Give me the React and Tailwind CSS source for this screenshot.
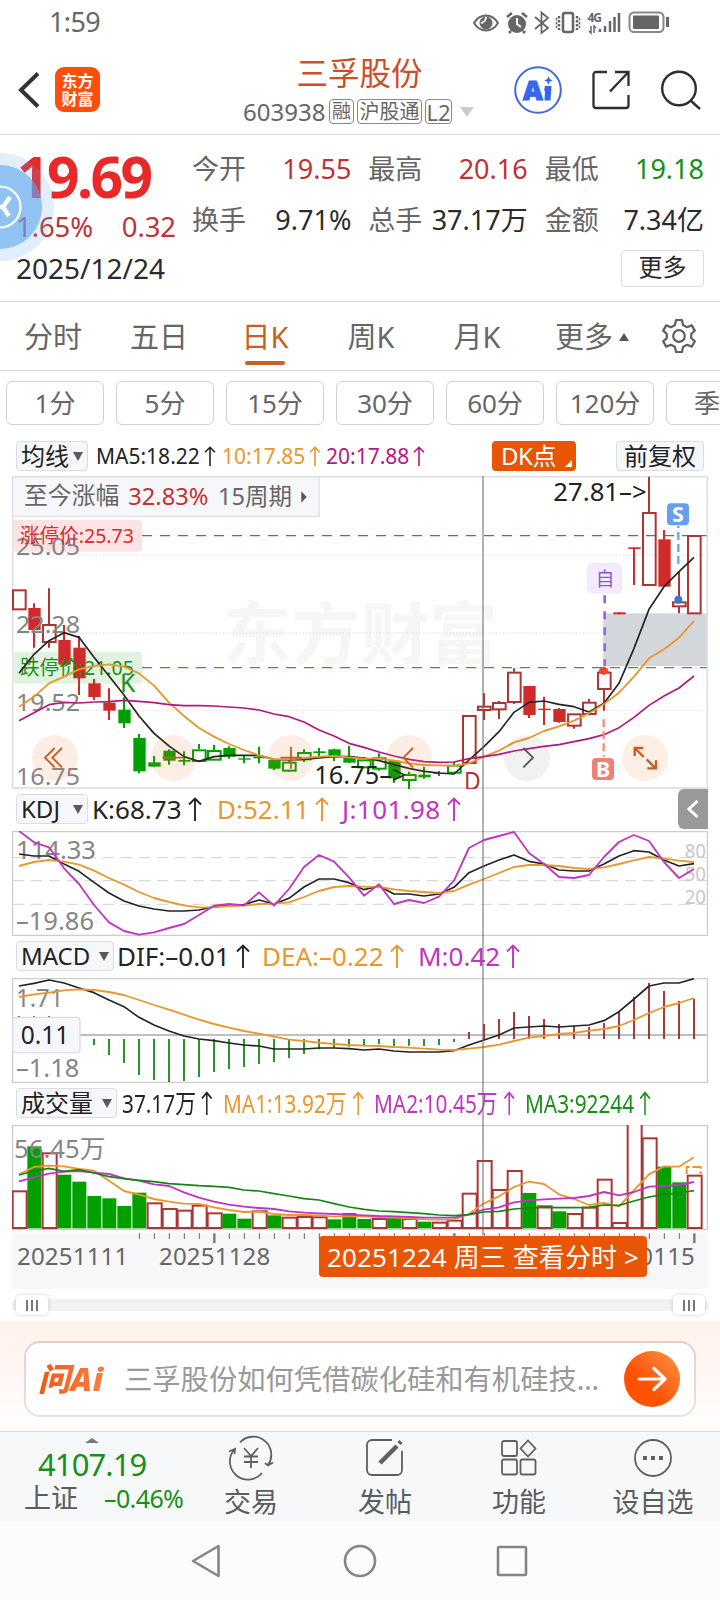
import React from "react";

// Every chart panel uses three drawing units per pixel; candle i sits at STEP * i + START.
const START = 57;
const STEP = 45;
const xAt = (i) => START + STEP * i;

const RED = "#ad3534";
const RED_FILL = "#cf2b2b";
const GREEN = "#00a000";
const ORANGE = "#e8982c";
const PURPLE = "#bf35c4";
const MAGENTA = "#b2187f";
const BLACK = "#242424";

// [kind, high, top, bottom, low] — R/G hollow bodies, r/g solid ones
const CANDLES = [
  ["R", 358, 358, 418, 418], ["r", 400, 414, 480, 533], ["R", 355, 462, 516, 533], ["r", 465, 510, 584, 584],
  ["r", 498, 533, 625, 675], ["r", 627, 640, 681, 690], ["r", 655, 698, 722, 750], ["g", 682, 719, 760, 774],
  ["g", 792, 804, 904, 910], ["g", 858, 877, 890, 890], ["g", 838, 842, 872, 884], ["g", 844, 870, 875, 886],
  ["G", 822, 838, 873, 873], ["G", 825, 840, 869, 869], ["g", 829, 834, 860, 866], ["g", 855, 865, 869, 880],
  ["g", 830, 860, 865, 880], ["g", 868, 870, 896, 900], ["G", 870, 875, 902, 905], ["G", 838, 846, 868, 876],
  ["g", 834, 844, 849, 858], ["g", 836, 838, 862, 873], ["g", 828, 864, 878, 878], ["G", 862, 868, 892, 892],
  ["G", 850, 862, 896, 902], ["g", 870, 872, 925, 938], ["G", 905, 912, 930, 958], ["g", 890, 914, 922, 926],
  ["g", 903, 909, 912, 918], ["G", 875, 884, 908, 912], ["R", 735, 735, 879, 880], ["R", 670, 707, 720, 750],
  ["R", 693, 696, 718, 747], ["R", 595, 605, 696, 702], ["r", 648, 648, 735, 744], ["r", 680, 716, 720, 765],
  ["r", 714, 717, 756, 758], ["R", 730, 730, 767, 776], ["R", 687, 695, 732, 736], ["R", 590, 605, 657, 722],
  ["r", 427, 427, 433, 433], ["r", 232, 232, 237, 345], ["R", 20, 126, 345, 348], ["r", 180, 208, 350, 350],
  ["R", 305, 394, 409, 430], ["R", 195, 195, 430, 430],
];

const MA5 = [610, 553, 512, 488, 502, 562, 618, 675, 738, 790, 828, 860, 874, 860, 856, 856, 856, 868, 870, 868, 864, 860, 860, 864, 872, 884, 895, 904, 909, 912, 870, 830, 785, 727, 697, 693, 703, 710, 726, 700, 640, 535, 418, 350, 305, 262];
const MA10 = [710, 680, 640, 620, 598, 588, 583, 590, 610, 647, 698, 738, 774, 800, 822, 840, 856, 868, 868, 864, 860, 858, 862, 866, 866, 872, 880, 885, 886, 888, 880, 860, 842, 817, 804, 783, 769, 752, 730, 702, 668, 620, 565, 538, 503, 453];
const MA20 = [752, 728, 704, 697, 699, 696, 695, 691, 694, 698, 704, 707, 707, 708, 711, 714, 720, 732, 740, 756, 780, 798, 820, 832, 846, 858, 868, 875, 877, 876, 866, 860, 853, 843, 836, 829, 824, 815, 806, 794, 773, 742, 706, 678, 654, 618];

const K_LINE = [192, 198, 198, 222, 244, 277, 309, 333, 348, 357, 363, 363, 360, 350, 346, 344, 330, 342, 325, 291, 267, 267, 278, 299, 288, 312, 312, 318, 312, 292, 248, 228, 210, 195, 214, 222, 240, 243, 243, 222, 198, 182, 186, 210, 228, 221];
const D_LINE = [228, 216, 210, 215, 224, 242, 264, 284, 306, 324, 336, 346, 352, 352, 348, 347, 342, 341, 337, 321, 303, 291, 288, 290, 291, 298, 303, 306, 309, 303, 284, 267, 249, 231, 225, 225, 228, 234, 237, 232, 222, 211, 201, 206, 212, 216];
const J_LINE = [123, 157, 172, 235, 282, 345, 397, 423, 434, 427, 414, 402, 375, 347, 342, 346, 307, 347, 297, 231, 195, 215, 262, 317, 283, 342, 330, 339, 320, 272, 174, 150, 138, 126, 189, 222, 261, 264, 255, 201, 156, 135, 153, 216, 264, 237];

const DIF = [588, 580, 570, 579, 594, 608, 630, 650, 682, 705, 723, 738, 747, 752, 759, 765, 768, 777, 777, 777, 774, 774, 776, 780, 777, 783, 786, 786, 786, 782, 765, 750, 735, 714, 711, 708, 711, 708, 705, 692, 665, 627, 588, 579, 579, 566];
const DEA = [621, 613, 608, 601, 598, 600, 606, 615, 630, 645, 659, 674, 689, 702, 713, 723, 731, 740, 749, 753, 758, 762, 765, 767, 768, 771, 773, 776, 779, 780, 776, 771, 764, 753, 743, 738, 732, 729, 722, 717, 708, 690, 669, 651, 639, 624];
const MACD_ENDS = [678, 678, 678, 700, 730, 765, 795, 819, 855, 870, 876, 873, 861, 846, 837, 831, 822, 816, 804, 792, 778, 773, 770, 769, 762, 769, 767, 768, 765, 756, 726, 702, 687, 666, 678, 687, 702, 708, 711, 699, 663, 621, 579, 603, 633, 627];

const VOLUMES = [
  ["R", 317], ["g", 184], ["R", 203], ["g", 269], ["g", 290], ["g", 333], ["g", 340], ["g", 363], ["g", 323], ["R", 353],
  ["R", 370], ["R", 375], ["R", 360], ["R", 383], ["g", 386], ["g", 401], ["R", 377], ["g", 391], ["R", 396], ["R", 394],
  ["R", 395], ["g", 403], ["g", 384], ["g", 402], ["R", 400], ["g", 398], ["R", 400], ["g", 410], ["R", 411], ["R", 405],
  ["R", 324], ["R", 226], ["R", 313], ["R", 256], ["g", 324], ["R", 362], ["g", 379], ["R", 385], ["R", 366], ["R", 282],
  ["R", 412], ["R", 90], ["R", 158], ["g", 245], ["g", 292], ["R", 270],
];
const VOL_MA1 = [268, 246, 242, 244, 252, 257, 287, 318, 329, 342, 350, 356, 357, 367, 375, 381, 380, 387, 390, 390, 391, 395, 393, 395, 396, 398, 400, 403, 404, 403, 387, 355, 334, 306, 290, 297, 328, 342, 360, 354, 364, 316, 268, 244, 245, 217];
const VOL_MA2 = [289, 277, 266, 260, 258, 263, 267, 280, 287, 298, 303, 322, 338, 350, 359, 365, 369, 372, 379, 383, 385, 387, 389, 391, 393, 394, 396, 398, 398, 398, 388, 374, 367, 352, 346, 343, 341, 339, 333, 321, 331, 321, 305, 303, 300, 291];
const VOL_MA3 = [270, 258, 250, 259, 254, 264, 275, 281, 286, 290, 296, 299, 302, 304, 307, 315, 318, 326, 333, 341, 345, 356, 366, 373, 378, 380, 383, 386, 390, 392, 389, 381, 379, 372, 369, 367, 368, 368, 367, 360, 361, 348, 336, 328, 324, 317];

const QUOTES = [
  ["今开", "19.55", "text-[#c03334]"],
  ["最高", "20.16", "text-[#c03334]"],
  ["最低", "19.18", "text-[#179017]"],
  ["换手", "9.71%", "text-[#2b2b2b]"],
  ["总手", "37.17万", "text-[#2b2b2b]"],
  ["金额", "7.34亿", "text-[#2b2b2b]"],
];

const TABS = ["分时", "五日", "日K", "周K", "月K"];
const INTERVALS = ["1分", "5分", "15分", "30分", "60分", "120分", "季K"];

function Line({ data, color, width = 5 }) {
  return (
    <polyline
      points={data.map((y, i) => `${xAt(i)},${y}`).join(" ")}
      fill="none"
      stroke={color}
      strokeWidth={width}
      strokeLinejoin="round"
    />
  );
}

function Label({ x, y, w, size = 72, color = "#858585", children }) {
  return (
    <text x={x} y={y} textLength={w} lengthAdjust="spacingAndGlyphs" fontSize={size} fill={color}>
      {children}
    </text>
  );
}

function Up({ className = "" }) {
  return (
    <svg className={`inline-block shrink-0 ${className}`} viewBox="0 0 14 24" fill="none" stroke="currentColor" strokeWidth="1.900">
      <path d="M7 24V1M1 7.500l6-6 6 6" />
    </svg>
  );
}

function Caret() {
  return (
    <svg className="w-[10px] h-[9px] shrink-0" viewBox="0 0 10 9">
      <path d="M0 0h10L5 9z" fill="#5a5a5a" />
    </svg>
  );
}

function Picker({ className, children }) {
  return (
    <div className={`flex h-[30px] shrink-0 items-center justify-between rounded-[4px] border border-[#d9dce2] bg-[#f6f7fb] px-[4px] text-[24px] leading-none whitespace-nowrap text-[#222] ${className}`}>
      {children}
      <Caret />
    </div>
  );
}

// Indicator read-out: value text followed by its trend arrow
function Reading({ className, children }) {
  return (
    <div className={`flex shrink-0 items-center gap-[6px] text-[26px] leading-none whitespace-nowrap ${className}`}>
      <span>{children}</span>
      <Up className="w-[14px] h-[24px]" />
    </div>
  );
}

function NarrowReading({ className, children }) {
  return (
    <div className={`flex shrink-0 items-center whitespace-nowrap ${className}`}>
      <div className="flex origin-left scale-x-[0.8] items-center gap-[7px] text-[26px] leading-none">
        <span>{children}</span>
        <Up className="w-[14px] h-[24px]" />
      </div>
    </div>
  );
}

function StatusBar() {
  return (
    <div className="flex h-[45px] items-center justify-between pl-[49px] pr-[49px] text-[27px] tracking-[-0.6px] text-[#666]">
      <span>1:59</span>
      <svg className="h-[24px] w-[198px]" viewBox="0 0 198 24" fill="none" stroke="#666" strokeWidth="2">
        <path d="M1 12c6-10 18-10 24 0-6 10-18 10-24 0z" />
        <circle cx="13" cy="12" r="6.500" fill="#666" stroke="none" />
        <path d="M13 6a6 6 0 0 1-5 6" stroke="#fff" />
        <circle cx="44" cy="13" r="9" fill="#666" stroke="none" />
        <path d="M44 7v6l4 3" stroke="#fff" />
        <path d="M34 6l5-4M54 6l-5-4M38 20l-2 2M50 20l2 2" strokeWidth="2.500" />
        <path d="M62 6l13 11-6.500 5V1.500L75 7 62 18" strokeWidth="1.800" />
        <rect x="90" y="2" width="10" height="19" rx="2" strokeWidth="2.500" />
        <path d="M86 5v14M104 5v14" strokeDasharray="2.500 1.500" strokeWidth="2.500" />
        <path d="M83.500 7v10M106.500 7v10" strokeDasharray="2.500 1.500" strokeWidth="1.500" />
        <text x="114.500" y="10.500" fontSize="12" fontWeight="700" fill="#666" stroke="none" letterSpacing="-1">4G</text>
        <path d="M118 15v7l-2-2M121 22v-7l2 2" strokeWidth="1.500" />
        <path d="M127 18v3M132 15v6M137 10v11M141.500 6v15M146 2v19" strokeWidth="2.500" />
        <rect x="156.500" y="1.500" width="34" height="19.500" rx="4.500" stroke="#888" strokeWidth="2" />
        <rect x="160" y="4.500" width="26" height="13.500" rx="1" fill="#666" stroke="none" />
        <path d="M194.500 6v10" strokeWidth="3" />
      </svg>
    </div>
  );
}

function Header() {
  return (
    <header className="flex h-[90px] items-center border-b-[1.5px] border-[#d6d6d6] pl-[18px]">
      <svg className="h-[36px] w-[22px]" viewBox="0 0 22 36" fill="none" stroke="#333" strokeWidth="4">
        <path d="M20 1.500L3 18 20 34.500" />
      </svg>
      <div className="ml-[15px] flex h-[45px] w-[45px] flex-col items-center justify-center rounded-[9px] bg-[#ff4d0a] text-[16px] font-bold leading-[18px] text-white">
        <span>东方</span>
        <span>财富</span>
      </div>
      <div className="ml-[142px] flex w-[233px] flex-col items-center">
        <h1 className="pl-[2px] text-[31.500px] leading-[36px] text-[#cb4f2b]">三孚股份</h1>
        <div className="mt-[8px] flex items-center text-[20px] leading-none whitespace-nowrap text-[#666]">
          <span className="w-[86px] text-[24px] leading-[24px]">603938</span>
          <span className="flex h-[25px] w-[25px] items-center justify-center rounded-[4px] border border-[#888] text-[19px]">融</span>
          <span className="ml-[3px] flex h-[25px] w-[65px] items-center justify-center rounded-[4px] border border-[#888]">沪股通</span>
          <span className="ml-[3px] flex h-[25px] w-[27px] items-center justify-center rounded-[4px] border border-[#888] text-[22px]">L2</span>
          <svg className="ml-[8px] h-[10px] w-[14px]" viewBox="0 0 14 10"><path d="M0 0h14L7 10z" fill="#ccc" /></svg>
        </div>
      </div>
      <svg className="ml-[39px] h-[48px] w-[48px]" viewBox="0 0 48 48">
        <circle cx="24" cy="24" r="22.800" fill="none" stroke="#4468d8" strokeWidth="2" />
        <text x="9" y="34" fontSize="27" fontWeight="900" fill="#3566ee" stroke="#3566ee" strokeWidth="1.200">A</text>
        <path d="M31 20h6.500l-1 14.500h-6l.5-10h-1z" fill="#3566ee" />
        <path d="M34.500 10l1.200 3 3 1.500-3 1.200-1.200 3-1.200-3-3-1.200 3-1.500z" fill="#3566ee" />
      </svg>
      <svg className="ml-[30px] h-[40px] w-[38px]" viewBox="0 0 38 40" fill="none" stroke="#2e2e2e" strokeWidth="2.300">
        <path d="M15 2H4a2.500 2.500 0 0 0-2.500 2.500v31A2.500 2.500 0 0 0 4 38h30a2.500 2.500 0 0 0 2.500-2.500V25M23 2h13.500v14M36.500 2L18 21.500" />
      </svg>
      <svg className="ml-[31px] h-[40px] w-[40px]" viewBox="0 0 40 40" fill="none" stroke="#2e2e2e" strokeWidth="2.400">
        <circle cx="18" cy="18.500" r="16.800" />
        <path d="M29 30l10 9" />
      </svg>
    </header>
  );
}

function Quote() {
  return (
    <section className="relative h-[167px] border-b-[1.5px] border-[#d6d6d6] pl-[16px] pr-[16px]">
      <div className="flex h-[111px] justify-between">
        <div className="w-[160px] pt-[13px]">
          <div className="pl-[1px] text-[57px] font-bold leading-[56px] tracking-[-2.6px] text-[#e8292a]">19.69</div>
          <div className="mt-[8px] flex justify-between text-[27.500px] leading-[30px] tracking-[-0.1px] text-[#c03334]">
            <span>1.65%</span>
            <span>0.32</span>
          </div>
        </div>
        <div className="grid w-[512px] grid-cols-3 gap-x-[17px] pt-[9px] text-[27px]">
          {QUOTES.map(([name, value, tone]) => (
            <div key={name} className="flex h-[50px] items-center justify-between whitespace-nowrap">
              <span className="text-[#666]">{name}</span>
              <span className={tone}>{value}</span>
            </div>
          ))}
        </div>
      </div>
      <div className="flex items-center justify-between">
        <span className="text-[28px] leading-[44px] text-[#2b2b2b]">2025/12/24</span>
        <button className="h-[37px] w-[83px] rounded-[4px] border border-[#dedede] pb-[2px] text-[24px] leading-none text-[#2b2b2b]">更多</button>
      </div>
      <svg className="absolute left-0 top-[18px] h-[108px] w-[54px]" viewBox="0 0 54 108">
        <circle cx="0" cy="54" r="54" fill="#5b9ee8" opacity="0.18" />
        <circle cx="0" cy="54" r="42" fill="#5ea6ee" opacity="0.62" />
        <circle cx="0" cy="54" r="20.500" fill="none" stroke="#fff" strokeWidth="2.200" />
        <path d="M10 44L3 54l6 9M-2 54h6" fill="none" stroke="#fff" strokeWidth="4.500" />
      </svg>
    </section>
  );
}

function PeriodTabs() {
  return (
    <nav className="flex h-[69px] border-b border-[#d6d6d6] text-[29px] text-[#666]">
      {TABS.map((tab) => (
        <div
          key={tab}
          className={`flex w-[106px] flex-col items-center pt-[15px] leading-[40px] ${tab === "日K" ? "text-[#c85f24]" : ""}`}
        >
          {tab}
          {tab === "日K" && <span className="mt-[4px] h-[4px] w-[40px] rounded-full bg-[#c85f24]" />}
        </div>
      ))}
      <div className="flex w-[124px] items-start justify-center gap-[6px] pt-[15px] leading-[40px]">
        更多
        <svg className="mt-[16px] h-[8px] w-[10px]" viewBox="0 0 10 8"><path d="M0 8h10L5 0z" fill="#555" /></svg>
      </div>
      <svg className="ml-[7px] mt-[16px] h-[36px] w-[36px]" viewBox="0 0 36 36" fill="none" stroke="#5f5f5f" strokeWidth="2.200" strokeLinejoin="round">
        <path d="M15 2h6l1 5 4 2.200 4.800-1.800 3 5.200-3.600 3.400v4l3.600 3.400-3 5.200-4.800-1.800L22 29l-1 5h-6l-1-5-4-2.200-4.800 1.800-3-5.200L5.800 20v-4l-3.600-3.400 3-5.200L10 9.200 14 7z" />
        <circle cx="18" cy="18" r="5.800" />
      </svg>
    </nav>
  );
}

function IntervalBar() {
  return (
    <div className="flex gap-[12px] overflow-hidden pl-[6px] pt-[10px]">
      {INTERVALS.map((name) => (
        <button key={name} className="flex h-[44px] w-[98px] shrink-0 items-center justify-center rounded-[6px] border border-[#d2d2d2] text-[26px] leading-none text-[#666]">
          {name}
        </button>
      ))}
    </div>
  );
}

function AverageBar() {
  return (
    <div className="flex h-[51px] items-center pl-[16px] pr-[16px] pt-[11px] text-[21px] leading-none whitespace-nowrap">
      <Picker className="w-[72px]">均线</Picker>
      <div className="ml-[8px] flex w-[126px] items-center gap-[4px] text-[#242424]">
        MA5:18.22
        <Up className="h-[20px] w-[12px]" />
      </div>
      <div className="flex w-[104px] items-center gap-[4px] text-[#e8982c]">
        10:17.85
        <Up className="h-[20px] w-[12px]" />
      </div>
      <div className="flex w-[100px] items-center gap-[4px] text-[#b2187f]">
        20:17.88
        <Up className="h-[20px] w-[12px]" />
      </div>
      <div className="relative ml-auto mr-[40px] flex h-[30px] w-[84px] items-center rounded-[4px] bg-[#e85505] pl-[9px] text-[24px] tracking-[-0.5px] text-white">
        DK点
        <svg className="absolute bottom-[4px] right-[4px] h-[7px] w-[7px]" viewBox="0 0 7 7"><path d="M7 0v7H0z" fill="#fff" /></svg>
      </div>
      <div className="flex h-[30px] w-[88px] items-center justify-center rounded-[4px] border border-[#d9dce2] bg-[#f6f7fb] text-[24px] text-[#222]">
        前复权
      </div>
    </div>
  );
}

function Candle({ index, data }) {
  const [kind, high, top, bottom, low] = data;
  const x = xAt(index);
  const hollow = kind === "R" || kind === "G";
  const up = kind === "R" || kind === "r";
  const line = up ? (hollow ? RED : RED_FILL) : GREEN;
  if (hollow) {
    return (
      <g stroke={line} strokeWidth="6" fill="none">
        <path d={`M${x} ${high}V${top}M${x} ${bottom}V${low}`} />
        <rect x={x - 18} y={top + 3} width="38" height={Math.max(bottom - top - 3, 4)} />
      </g>
    );
  }
  return (
    <g>
      <path d={`M${x} ${high}V${low}`} stroke={line} strokeWidth="6" />
      <rect x={x - 17} y={top} width="37" height={bottom - top} fill={line} />
    </g>
  );
}

function PriceChart() {
  return (
    <svg className="block h-[313px] w-[696px]" viewBox="36 18 2088 939">
      <text x="668" y="566" fontSize="206" fontWeight="700" fill="#f6f6f7" textLength="826">东方财富</text>
      <g stroke="#dcdcdc" strokeWidth="3" strokeDasharray="4 6">
        <path d="M38 255H2120M38 489H2120M38 722H2120" />
      </g>
      <rect x="38" y="20" width="2084" height="934" fill="none" stroke="#dedede" strokeWidth="5" />
      <rect x="38" y="21" width="919" height="118" fill="#f7f7fb" stroke="#dfe0e4" strokeWidth="4" />
      <rect x="1810" y="430" width="310" height="158" fill="#d3d6da" />

      <rect x="38" y="150" width="388" height="95" rx="10" fill="#fde3e3" />
      <rect x="38" y="546" width="388" height="95" rx="10" fill="#e1f2e0" />
      <path d="M426 197H2120" stroke="#c04a4a" strokeWidth="3.500" strokeDasharray="30 24" />
      <path d="M426 593H2120" stroke="#35a035" strokeWidth="3.500" strokeDasharray="30 24" />

      {CANDLES.map((c, i) => (
        <Candle key={i} index={i} data={c} />
      ))}

      <Label x="48" y="255" w="192">25.05</Label>
      <Label x="48" y="488" w="192">22.28</Label>
      <Label x="48" y="722" w="192">19.52</Label>
      <Label x="48" y="944" w="192">16.75</Label>
      <Label x="60" y="218" w="342" size="62" color="#d42f2f">涨停价:25.73</Label>
      <Label x="60" y="614" w="342" size="62" color="#179017">跌停价:21.05</Label>

      <Line data={MA5} color={BLACK} />
      <Line data={MA10} color={ORANGE} width={5.5} />
      <Line data={MA20} color={MAGENTA} />

      <Label x="72" y="103" w="286" size="71" color="#666">至今涨幅</Label>
      <Label x="385" y="104" w="240" size="72" color="#c8302f">32.83%</Label>
      <Label x="654" y="104" w="222" size="71" color="#666">15周期</Label>
      <path d="M904 64v34l16-17z" fill="#555" />

      <Label x="360" y="666" w="46" size="76" color="#179017">K</Label>
      <Label x="943" y="941" w="276" size="78" color="#222">16.75–&gt;</Label>
      <Label x="1392" y="960" w="50" size="74" color="#ad3534">D</Label>
      <Label x="1660" y="93" w="280" size="78" color="#222">27.81–&gt;</Label>

      <g fill="#f5813c" opacity="0.13">
        <circle cx="165" cy="864" r="69" />
        <circle cx="520" cy="864" r="69" />
        <circle cx="873" cy="864" r="69" />
        <circle cx="1227" cy="864" r="69" />
        <circle cx="1935" cy="864" r="69" />
      </g>
      <circle cx="1581" cy="864" r="69" fill="#777" opacity="0.1" />
      <g fill="none" stroke="#cf5a1e" strokeWidth="5.500">
        <path d="M164 834l-29 29 29 29M186 834l-29 29 29 29" />
        <path d="M487 863h65M841 863h65M873 831v65" />
        <path d="M1239 834l-29 29 29 29" />
        <path d="M1904 858v-24h26M1904 834l27 27M1942 895h26v-24M1940 868l27 27" strokeWidth="7" />
      </g>
      <path d="M1570 834l29 29-29 29" fill="none" stroke="#555" strokeWidth="5.500" />

      <path d="M1814 376v212" stroke="#9a66e0" strokeWidth="8" strokeDasharray="24 24" />
      <rect x="1760" y="279" width="107" height="92" rx="18" fill="#f3ebff" />
      <Label x="1787" y="347" w="56" size="57" color="#9450dc">自</Label>
      <path d="M1796 606a15 15 0 0 1 30 0l-15 10z" fill="#f4432c" />
      <path d="M1811 748v112" stroke="#f28a80" strokeWidth="7" strokeDasharray="24 12" />
      <rect x="1776" y="864" width="66" height="66" rx="12" fill="#f17f73" />
      <text x="1809" y="920" fontSize="64" fontWeight="700" fill="#fff" textAnchor="middle">B</text>
      <path d="M2035 168v120" stroke="#69a6f0" strokeWidth="7" strokeDasharray="24 12" strokeDashoffset="18" />
      <rect x="2001" y="100" width="66" height="66" rx="12" fill="#649ff0" />
      <text x="2034" y="156" fontSize="64" fontWeight="700" fill="#fff" textAnchor="middle">S</text>
      <circle cx="2035" cy="389" r="12" fill="#3d77d6" />
    </svg>
  );
}

function KdjChart() {
  return (
    <svg className="block h-[105px] w-[696px]" viewBox="36 123 2088 315">
      <rect x="38" y="125" width="2084" height="311" fill="none" stroke="#c9c9c9" strokeWidth="3.500" />
      <path d="M38 203H2120M38 272H2120M38 343H2120" stroke="#dadada" strokeWidth="4" strokeDasharray="34 20" />
      <Label x="48" y="207" w="240" size="76">114.33</Label>
      <Label x="48" y="421" w="234" size="76">–19.86</Label>
      <Label x="2054" y="205" w="64" size="62" color="#c8c8c8">80</Label>
      <Label x="2054" y="273" w="64" size="62" color="#c8c8c8">50</Label>
      <Label x="2054" y="343" w="64" size="62" color="#c8c8c8">20</Label>
      <Line data={K_LINE} color={BLACK} width={5} />
      <Line data={D_LINE} color={ORANGE} width={5.5} />
      <Line data={J_LINE} color={PURPLE} width={5.5} />
    </svg>
  );
}

function MacdChart() {
  return (
    <svg className="block h-[105px] w-[696px]" viewBox="36 564 2088 315">
      <rect x="38" y="566" width="2084" height="311" fill="none" stroke="#c9c9c9" strokeWidth="3.500" />
      <path d="M38 735H2120" stroke="#aaa" strokeWidth="5" />
      <Label x="48" y="650" w="142" size="76">1.71</Label>
      <Label x="48" y="862" w="190" size="76">–1.18</Label>
      {MACD_ENDS.map((y, i) => (
        <path key={i} d={`M${xAt(i)} 747V${y}`} stroke={y > 747 ? "#1a8a1a" : "#9c2a2a"} strokeWidth="5.500" />
      ))}
      <Line data={DIF} color={BLACK} width={5} />
      <Line data={DEA} color={ORANGE} width={5.5} />
      <rect x="38" y="682" width="202" height="106" rx="10" fill="#f6f7fb" stroke="#d9dce2" strokeWidth="4" />
      <Label x="62" y="762" w="146" size="77" color="#222">0.11</Label>
    </svg>
  );
}

function VolumeChart() {
  return (
    <svg className="block h-[105px] w-[696px]" viewBox="36 120 2088 315">
      <rect x="38" y="122" width="2084" height="311" fill="none" stroke="#c9c9c9" strokeWidth="3.500" />
      {VOLUMES.map(([kind, top], i) =>
        kind === "g" ? (
          <rect key={i} x={xAt(i) - 20} y={top} width="42" height={430 - top} fill={GREEN} />
        ) : (
          <rect key={i} x={xAt(i) - 19} y={top + 2} width="42" height={427 - top} fill="#fff" stroke={RED} strokeWidth="6" />
        )
      )}
      <path d="M2060 267v-21h42v21" fill="none" stroke={ORANGE} strokeWidth="6" strokeDasharray="30 8" />
      <Label x="42" y="219" w="274" size="76">56.45万</Label>
      <Line data={VOL_MA1} color={ORANGE} width={5.5} />
      <Line data={VOL_MA2} color={PURPLE} width={5.5} />
      <Line data={VOL_MA3} color="#178417" width={5} />
    </svg>
  );
}

function DateAxis() {
  const ticks = Array.from({ length: 38 }, (_, k) => k + 8);
  return (
    <div className="relative mt-[3px] h-[56px] w-[696px] bg-[#f7f7fa] text-[#666]">
      <svg className="block h-[11px] w-[696px]" viewBox="36 444 2088 33">
        {ticks.map((i) => {
          const major = i === 13 || i === 29 || i === 45;
          return (
            <path key={i} d={`M${xAt(i) + 1} 445V${major ? 474 : 462}`} stroke={major ? "#777" : "#666"} strokeWidth={major ? 7 : 3} />
          );
        })}
      </svg>
      <div className="flex items-center text-[24px] leading-[24px] tracking-[0.2px]">
        <span className="ml-[5px] w-[142px]">20251111</span>
        <span>20251128</span>
        <span className="ml-auto mr-[13px]">20260115</span>
      </div>
      <div className="absolute left-[307px] top-[3px] z-20 flex h-[41px] w-[328px] items-center justify-center rounded-[4px] bg-[#e85505] text-[26px] leading-none tracking-[0.1px] whitespace-nowrap text-white">
        20251224 周三 查看分时 &gt;
      </div>
    </div>
  );
}

function Grip() {
  return (
    <span className="flex h-[20px] w-[32px] items-center justify-center gap-[3px] rounded-[5px] bg-white shadow-[0_0_4px_rgba(0,0,0,0.18)]">
      <i className="h-[11px] w-[2px] bg-[#777]" />
      <i className="h-[11px] w-[2px] bg-[#777]" />
      <i className="h-[11px] w-[2px] bg-[#777]" />
    </span>
  );
}

function AskBanner() {
  return (
    <div className="h-[110px] bg-gradient-to-b from-[#fff2ec] to-[#fffdfc] px-[24px] pt-[20px]">
      <div className="h-[76px] rounded-[16px] bg-gradient-to-b from-[#efc9c3] to-[#dfe5ef] p-[2px]">
        <div className="flex h-full items-center rounded-[14px] bg-white pl-[12px] pr-[14px]">
          <span className="w-[86px] bg-gradient-to-r from-[#f4560c] to-[#f98a4c] bg-clip-text text-[32px] font-black italic leading-[40px] tracking-[0.5px] whitespace-nowrap text-transparent">
            问Ai
          </span>
          <span className="text-[28.300px] leading-none whitespace-nowrap text-[#999]">三孚股份如何凭借碳化硅和有机硅技…</span>
          <span className="ml-auto flex h-[56px] w-[56px] shrink-0 items-center justify-center rounded-full bg-gradient-to-bl from-[#ff913f] to-[#ff5200] to-60%">
            <svg className="h-[26px] w-[30px]" viewBox="0 0 30 26" fill="none" stroke="#fff" strokeWidth="3.200" strokeLinecap="round" strokeLinejoin="round">
              <path d="M2 13h25M17 2.500L28 13 17 23.500" />
            </svg>
          </span>
        </div>
      </div>
    </div>
  );
}

const ICONS = {
  交易: (
    <>
      <path d="M10 5.500A18 18 0 0 1 38 28M35 26l3 2.500 5-3M32 36A18 18 0 0 1 4 13M-1 14.500l6-2.500-.5 5" />
      <path d="M14 11l7 8 7-8M14 19.500h14M14 25h14M21 19v12" />
    </>
  ),
  发帖: (
    <>
      <path d="M28 3H8a5 5 0 0 0-5 5v25a5 5 0 0 0 5 5h25a5 5 0 0 0 5-5V14" />
      <path d="M16 26L33 9M35 6.500l2-2" strokeWidth="4.500" />
    </>
  ),
  功能: (
    <>
      <rect x="4" y="4" width="15" height="15" rx="2" />
      <rect x="4" y="22.500" width="15" height="15" rx="2" />
      <rect x="22.500" y="22.500" width="15" height="15" rx="2" />
      <path d="M30 3.500l7.500 8-7.500 8-7.500-8z" />
    </>
  ),
  设自选: (
    <>
      <circle cx="21" cy="21" r="18" />
      <path d="M11 21h4M19 21h4M27 21h4" strokeWidth="4" />
    </>
  ),
};

function BottomNav() {
  return (
    <nav className="flex h-[91px] border-t border-[#d9d9d9] bg-[#f6f8fa] text-[27px] leading-none text-[#5c5c5c]">
      <div className="w-[184px] pt-[6px]">
        <svg className="ml-[85px] block h-[5px] w-[14px]" viewBox="0 0 14 5"><path d="M0 5l7-5 7 5z" fill="#777" /></svg>
        <div className="pl-[38px] pt-[6px] text-[31px] leading-[31px] tracking-[-0.9px] text-[#179017]">4107.19</div>
        <div className="flex items-center pl-[24px] pt-[5px] leading-[26px]">
          <span className="w-[80px]">上证</span>
          <span className="text-[25px] tracking-[-0.6px] text-[#179017]">–0.46%</span>
        </div>
      </div>
      {Object.keys(ICONS).map((name) => (
        <div key={name} className="flex w-[134px] flex-col items-center pt-[5px]">
          <svg className="h-[42px] w-[42px] overflow-visible" viewBox="0 0 42 42" fill="none" stroke="#5f5f5f" strokeWidth="1.800">
            {ICONS[name]}
          </svg>
          <span className="mt-[9px]">{name}</span>
        </div>
      ))}
    </nav>
  );
}

function SystemNav() {
  return (
    <div className="flex h-[78px] items-center bg-[#fcfcfc] pl-[190px]">
      <svg className="h-[36px] w-[340px]" viewBox="0 0 340 36" fill="none" stroke="#858585" strokeWidth="2.600" strokeLinejoin="round">
        <path d="M28.500 3v30L3 18z" />
        <circle cx="170" cy="18" r="15" />
        <rect x="308" y="4" width="28" height="28" rx="1" />
      </svg>
    </div>
  );
}

export default function App() {
  return (
    <div className="h-[1600px] w-[720px] overflow-hidden bg-white font-['Noto_Sans','Noto_Sans_CJK_SC',sans-serif]">
      <StatusBar />
      <Header />
      <Quote />
      <PeriodTabs />
      <IntervalBar />
      <AverageBar />

      <main className="relative pl-[12px]">
        <PriceChart />
        <div className="flex h-[42px] items-center pb-[2px] pl-[4px]">
          <Picker className="w-[72px]">KDJ</Picker>
          <Reading className="ml-[4px] w-[125px] text-[#242424]">K:68.73</Reading>
          <Reading className="w-[125px] text-[#e8982c]">D:52.11</Reading>
          <Reading className="tracking-[0.4px] text-[#bf35c4]">J:101.98</Reading>
          <button className="ml-auto mr-[12px] flex h-[40px] w-[30px] items-center justify-center rounded-l-[6px] bg-[#999]">
            <svg className="h-[18px] w-[12px]" viewBox="0 0 12 18" fill="none" stroke="#fff" strokeWidth="3"><path d="M10.500 1L2 9l8.500 8" /></svg>
          </button>
        </div>
        <KdjChart />
        <div className="flex h-[42px] items-center pb-[2px] pl-[4px]">
          <Picker className="w-[98px]">MACD</Picker>
          <Reading className="ml-[3px] w-[145px] text-[#242424]">DIF:–0.01</Reading>
          <Reading className="w-[156px] text-[#e8982c]">DEA:–0.22</Reading>
          <Reading className="text-[#bf35c4]">M:0.42</Reading>
        </div>
        <MacdChart />
        <div className="flex h-[42px] items-center pb-[2px] pl-[4px]">
          <Picker className="w-[101px]">成交量</Picker>
          <NarrowReading className="ml-[5px] w-[101px] text-[#242424]">37.17万</NarrowReading>
          <NarrowReading className="w-[151px] text-[#e8982c]">MA1:13.92万</NarrowReading>
          <NarrowReading className="w-[151px] text-[#bf35c4]">MA2:10.45万</NarrowReading>
          <NarrowReading className="w-[151px] text-[#179017]">MA3:92244</NarrowReading>
        </div>
        <VolumeChart />
        <DateAxis />
        {/* crosshair through all panels */}
        <div className="absolute left-[482px] top-0 h-[759px] w-[2px] bg-[#666]/50" />
      </main>

      <div className="mt-[5px] flex h-[27px] items-start px-[12px]">
        <div className="mt-[5px] flex h-[12px] w-full items-center justify-between rounded-full bg-[#f1f1f3] pl-[4px] pr-[3px]">
          <Grip />
          <Grip />
        </div>
      </div>
      <AskBanner />
      <BottomNav />
      <SystemNav />
    </div>
  );
}
